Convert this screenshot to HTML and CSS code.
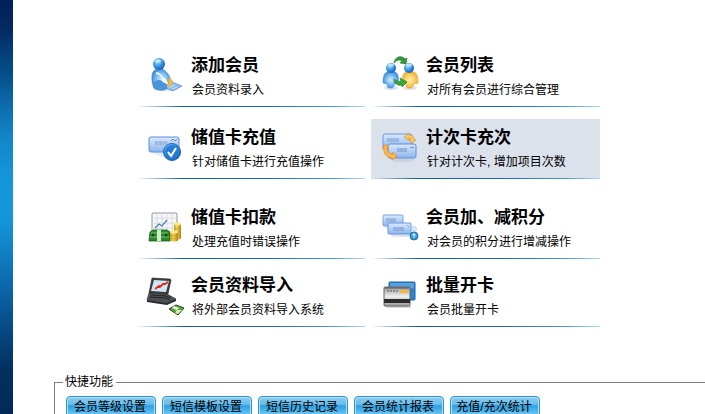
FILE: index.html
```html
<!DOCTYPE html>
<html lang="zh-CN">
<head>
  <meta charset="UTF-8">
  <meta name="viewport" content="width=device-width, initial-scale=1.0">
  <title>会员管理</title>
  <link rel="stylesheet" href="styles.css">
</head>
<body>
  <!-- shared gradients -->
  <svg class="defs" width="0" height="0" aria-hidden="true">
    <defs>
      <radialGradient id="ball" cx="0.38" cy="0.3" r="0.75">
        <stop offset="0" stop-color="#a8dcfb"/>
        <stop offset="0.5" stop-color="#3f9be6"/>
        <stop offset="1" stop-color="#1259ae"/>
      </radialGradient>
      <radialGradient id="body" cx="0.5" cy="0.5" r="0.6">
        <stop offset="0" stop-color="#d3edfd"/>
        <stop offset="0.5" stop-color="#7dbcf0"/>
        <stop offset="1" stop-color="#2f80d2"/>
      </radialGradient>
      <radialGradient id="yellow" cx="0.5" cy="0.5" r="0.6">
        <stop offset="0" stop-color="#fdefb8"/>
        <stop offset="0.5" stop-color="#fbd163"/>
        <stop offset="1" stop-color="#eba52c"/>
      </radialGradient>
      <linearGradient id="card" x1="0" y1="0" x2="0" y2="1">
        <stop offset="0" stop-color="#d9e9fd"/>
        <stop offset="1" stop-color="#8fb4ec"/>
      </linearGradient>
      <linearGradient id="coin" x1="0" y1="0" x2="1" y2="0">
        <stop offset="0" stop-color="#c8951a"/>
        <stop offset="0.4" stop-color="#f6d75c"/>
        <stop offset="1" stop-color="#b07f12"/>
      </linearGradient>
      <linearGradient id="silver" x1="0" y1="0" x2="0" y2="1">
        <stop offset="0" stop-color="#9b9b9b"/>
        <stop offset="0.5" stop-color="#eeeeee"/>
        <stop offset="1" stop-color="#9a9a9a"/>
      </linearGradient>
    </defs>
  </svg>

  <div class="page">
    <div class="sidebar"></div>
    <main class="content">
      <nav class="menu">
        <div class="menu-row">
          <a class="item" href="#">
            <svg class="icon" viewBox="0 0 44 48">
              <ellipse cx="21" cy="38" rx="12" ry="2" fill="#dfe6ee"/>
              <path d="M19 36l9-5 10 4-9 5z" fill="#8db9ec" stroke="#5b8fd0" stroke-width=".7"/>
              <path d="M22 36l6-3M25 37l6-3M28 38l5-2" stroke="#dcecfc" stroke-width=".8"/>
              <path d="M9 21c3-4 9-4 12-1 3 2 5 6 6 10l-3 2-3-2 2 7c-2 3-9 3-13 0-2-4-3-12-1-16z" fill="url(#body)" stroke="#2670c0" stroke-width=".6"/>
              <path d="M9 32c4-4 9-4 12 0 2 3 1 6-2 6-4 0-9-2-10-6z" fill="#4b94dc"/>
              <path d="M12 22c3 0 6 3 8 7" fill="none" stroke="#e2f4ff" stroke-width="2"/>
              <path d="M17 29l3 3 4 0-3-5z" fill="#fff"/>
              <path d="M25 26l4 4-2 5-3 1z" fill="#f6b824"/>
              <circle cx="15" cy="13" r="6" fill="url(#ball)"/>
              <ellipse cx="14" cy="10" rx="3" ry="1.500" fill="#d8f1ff" opacity=".75"/>
            </svg>
            <span class="text"><strong>添加会员</strong><small>会员资料录入</small></span>
          </a>
          <a class="item" href="#">
            <svg class="icon" viewBox="0 0 44 48">
              <ellipse cx="12" cy="37" rx="7" ry="2" fill="#d6e2ee"/>
              <ellipse cx="31" cy="37" rx="7" ry="2" fill="#e2e2de"/>
              <path d="M8 21h8c3 1 4 6 3 10 0 2-2 2-3 1-1 2-1 4-3 5h-3c-2-1-2-3-2-5-1 1-4 1-4-1 0-4 1-9 4-10z" fill="url(#body)" stroke="#3d86d2" stroke-width=".6"/>
              <path d="M27 21h8c3 1 4 6 4 10 0 2-2 2-4 1 0 2-1 4-3 5h-3c-2-1-2-3-2-5-1 1-4 1-4-1 0-4 1-9 4-10z" fill="url(#yellow)" stroke="#d99a2c" stroke-width=".6"/>
              <circle cx="12" cy="17" r="5" fill="url(#ball)"/>
              <circle cx="30" cy="17" r="5" fill="url(#ball)"/>
              <ellipse cx="12" cy="14" rx="3" ry="1.500" fill="#d8f1ff" opacity=".7"/>
              <ellipse cx="30" cy="14" rx="3" ry="1.500" fill="#d8f1ff" opacity=".7"/>
              <path d="M15 12c1-7 8-8 11-4l2-1-1 6-6-1 2-2c-3-2-5-1-8 2z" fill="#2f9c36" stroke="#1c7425" stroke-width=".6"/>
              <path d="M15 28c2 2 4 3 7 2l-1-3 7 4-5 5v-2c-4 1-8-1-8-6z" fill="#39a83b" stroke="#1c7425" stroke-width=".6"/>
            </svg>
            <span class="text"><strong>会员列表</strong><small>对所有会员进行综合管理</small></span>
          </a>
        </div>

        <div class="menu-row">
          <a class="item" href="#">
            <svg class="icon" viewBox="0 0 44 48">
              <path d="M8 29h17v5c-7 0-13-1-17-5z" fill="#e6ebf1"/>
              <rect x="5" y="14" width="30" height="15" rx="2" fill="url(#card)" stroke="#5c8fdc"/>
              <path d="M11 19h13M11 21h13" stroke="#7596c4" stroke-dasharray="2 .6"/>
              <path d="M27 18l2-2 2 2 2-2" fill="none" stroke="#668cc6"/>
              <circle cx="28" cy="29" r="8.500" fill="url(#ball)" stroke="#1c63bd"/>
              <circle cx="28" cy="29" r="7" fill="#287bd8"/>
              <path d="M24 29l3 4 5-8" fill="none" stroke="#fff" stroke-width="2"/>
            </svg>
            <span class="text"><strong>储值卡充值</strong><small>针对储值卡进行充值操作</small></span>
          </a>
          <a class="item active" href="#">
            <svg class="icon" viewBox="0 0 44 48">
              <path d="M10 36h26l-3 3H16z" fill="#cbd2dd"/>
              <rect x="4" y="11" width="29" height="15" rx="2" fill="url(#card)" stroke="#6c9be0"/>
              <path d="M8 16h12M8 18h12" stroke="#7d9dca"/>
              <rect x="9" y="21" width="28" height="14" rx="2" fill="url(#card)" stroke="#5a8edb"/>
              <path d="M18 26h10M18 28h10" stroke="#6e91c4"/>
              <path d="M31 25l2-1 2 1" fill="none" stroke="#5f84bd"/>
              <path d="M25 14l5-4v2c4 0 5 3 5 5h2l-4 3-3-3h2c0-2-1-2-2-2v2z" fill="#fdc866" stroke="#e58a16" stroke-width=".7"/>
              <path d="M7 21l3 4H8c0 4 2 6 6 6v-2l4 4-5 4v-2c-6-1-9-5-8-10H3z" fill="#fcb84c" stroke="#e58a16" stroke-width=".7"/>
            </svg>
            <span class="text"><strong>计次卡充次</strong><small>针对计次卡, 增加项目次数</small></span>
          </a>
        </div>

        <div class="menu-row spaced">
          <a class="item" href="#">
            <svg class="icon" viewBox="0 0 44 48">
              <rect x="8" y="10" width="25" height="25" rx="1" fill="#f6f7f8" stroke="#8f969c"/>
              <path d="M8 15h25M8 20h25M8 25h25M13 10v25M18 10v25M23 10v25M28 10v25" stroke="#d5d9dc" stroke-width=".8"/>
              <path d="M11 25l4-4 3 2 5-6" fill="none" stroke="#477fb7" stroke-width="1.200"/>
              <path d="M6 29l3-2h14l3 2v9H5z" fill="#298a2d" stroke="#17611c" stroke-width=".8"/>
              <path d="M7 30h17M6 34h19" stroke="#78c46d"/>
              <path d="M13 27h4v11h-4z" fill="#d6ecd0"/>
              <circle cx="9" cy="32" r="1.500" fill="#124f19"/>
              <circle cx="22" cy="32" r="1.500" fill="#124f19"/>
              <path d="M30 21v14c0 2 7 2 7 0V21z" fill="url(#coin)"/>
              <ellipse cx="33.500" cy="21" rx="3.500" ry="1.500" fill="#fbe688"/>
              <path d="M30 25q3 2 7 0M30 28q3 2 7 0M30 31q3 2 7 0" fill="none" stroke="#c2952a" stroke-width=".6"/>
              <path d="M26 29v8c0 2 8 2 8 0v-8z" fill="url(#coin)"/>
              <ellipse cx="30" cy="29" rx="4" ry="1.500" fill="#fbe688"/>
              <path d="M26 32q4 2 8 0M26 35q4 2 8 0" fill="none" stroke="#c2952a" stroke-width=".6"/>
            </svg>
            <span class="text"><strong>储值卡扣款</strong><small>处理充值时错误操作</small></span>
          </a>
          <a class="item" href="#">
            <svg class="icon" viewBox="0 0 44 48">
              <path d="M6 23h5v3H8zM11 31h20v3H14z" fill="#dde4ee"/>
              <rect x="4" y="12" width="20" height="11" rx="1" fill="url(#card)" stroke="#7da6e4"/>
              <path d="M7 16h10M7 18h10" stroke="#7f9dc9"/>
              <rect x="9" y="20" width="23" height="11" rx="1" fill="url(#card)" stroke="#6796df"/>
              <path d="M14 25h11M14 27h11" stroke="#7797c8"/>
              <path d="M28 22l2 2" stroke="#6e93c8"/>
              <circle cx="35" cy="26" r="2.500" fill="#d6ebf9" stroke="#a3cbea" stroke-width=".7"/>
              <circle cx="35" cy="33" r="4" fill="#3996cf" stroke="#2474b0"/>
              <path d="M33 32h4M35 30v5" stroke="#c9ecff" stroke-width="1.200"/>
            </svg>
            <span class="text"><strong>会员加、减积分</strong><small>对会员的积分进行增减操作</small></span>
          </a>
        </div>

        <div class="menu-row tight">
          <a class="item" href="#">
            <svg class="icon" viewBox="0 0 44 48">
              <path d="M8 7l18 1 1 1-3 14-19-1z" fill="#3b3d40" stroke="#222" stroke-width=".6"/>
              <path d="M10 9l15 1-3 11-15-1z" fill="#d2e7f5"/>
              <path d="M11 18l4-3 1 1 3-3 2 0 3-2" fill="none" stroke="#dd2b20" stroke-width="1.800"/>
              <path d="M5 22l18 1 9 5-9 4L3 29z" fill="#4c4f52" stroke="#2a2a2a" stroke-width=".6"/>
              <path d="M7 24l15 1 5 2M6 26l15 1 5 2" fill="none" stroke="#242527"/>
              <path d="M3 29l20 3 9-4v2l-9 4-20-3z" fill="#292a2c"/>
              <path d="M25 38l7-4 8 3-6 7z" fill="#5bab33" stroke="#293b23"/>
              <path d="M30 35l5 2-2 2-5-2z" fill="#eef3ea"/>
              <path d="M33 39h5l-4 4-3-1z" fill="#d6edbe"/>
            </svg>
            <span class="text"><strong>会员资料导入</strong><small>将外部会员资料导入系统</small></span>
          </a>
          <a class="item" href="#">
            <svg class="icon" viewBox="0 0 44 48">
              <path d="M6 35h26v2H8z" fill="#d5d5d5"/>
              <rect x="10" y="11" width="26" height="18" rx="1" fill="#2f83c8" stroke="#1b64a4"/>
              <path d="M11 12h24v5c-9 0-17 2-24 6z" fill="#56a2dc"/>
              <rect x="5" y="16" width="26" height="19" rx="1" fill="url(#silver)" stroke="#666"/>
              <path d="M6 17h24" stroke="#555"/>
              <path d="M8 20h11" stroke="#555" stroke-dasharray="2 1"/>
              <rect x="21" y="19" width="8" height="3" fill="#f5b53a"/>
              <rect x="5" y="28" width="26" height="4" fill="#2c2c2c"/>
            </svg>
            <span class="text"><strong>批量开卡</strong><small>会员批量开卡</small></span>
          </a>
        </div>
      </nav>

      <fieldset class="quick">
        <legend>快捷功能</legend>
        <div class="buttons">
          <button type="button">会员等级设置</button>
          <button type="button">短信模板设置</button>
          <button type="button">短信历史记录</button>
          <button type="button">会员统计报表</button>
          <button type="button">充值/充次统计</button>
        </div>
      </fieldset>
    </main>
  </div>
</body>
</html>
```
FILE: styles.css
```css
body {
  margin: 0;
  overflow: hidden;
  background-color: #fff;
  color: #000;
  font-family: "Liberation Sans", "Noto Sans CJK SC", sans-serif;
  font-size: 12px;
}

.defs {
  position: absolute;
}

.page {
  display: flex;
  min-height: 100vh;
}

.sidebar {
  flex: none;
  width: 13px;
  background: linear-gradient(#02205a 0, #042a62 30px, #053d77 50px, #05508a 75px, #0c67a8 100px, #1187c8 138px, #1596d8 180px, #1596d8 220px, #0c6cb0 280px, #084b88 325px, #03305f 370px, #022a58 414px);
}

.content {
  flex: 1;
  min-width: 0;
}

/* main menu */
.menu {
  max-width: 464px;
  margin: 47px 0 0 123px;
}

.menu-row {
  display: grid;
  grid-template-columns: 1fr 1fr;
  gap: 6px;
  margin-bottom: 12px;
}

.menu-row.spaced {
  margin-top: 20px;
}

.menu-row.spaced,
.menu-row.tight {
  margin-bottom: 8px;
}

.item {
  display: flex;
  box-sizing: border-box;
  height: 60px;
  padding: 4px 0 0 8px;
  background: linear-gradient(to right, transparent, #14609c 20%, #1a68a8 55%, #4a98d0 85%, #b4d8ee) bottom / 100% 1px no-repeat;
  color: #000;
  text-decoration: none;
}

.item.active {
  background-color: #dce2eb;
}

.icon {
  flex: none;
  width: 44px;
  height: 48px;
}

.text {
  display: flex;
  flex-direction: column;
  padding: 1px 0 0 3px;
  white-space: nowrap;
}

.text strong {
  font-size: 17px;
  line-height: 28px;
}

.text small {
  padding-left: 1px;
  font-size: 12px;
  line-height: 20px;
}

/* quick functions */
.quick {
  min-width: 0;
  margin: 46px 0 0 41px;
  padding: 5px 0 10px 11px;
  border: 1px solid #808080;
  border-right: 0;
}

.quick legend {
  margin-left: -3px;
  padding: 0 3px 0 2px;
  line-height: 18px;
}

.buttons {
  display: flex;
  flex-wrap: wrap;
  gap: 6px;
}

.buttons button {
  width: 90px;
  height: 22px;
  padding: 0 2px 1px 0;
  border: 1px solid #2496d8;
  border-radius: 4px;
  background: linear-gradient(#8fcdf0, #6dbdeb 35%, #2f9fe0 45%, #7fd0f8);
  box-shadow: inset 0 0 0 1px #b5e2f8;
  color: #000;
  font-family: inherit;
  font-size: 12px;
  line-height: 18px;
  white-space: nowrap;
  cursor: pointer;
}
```
